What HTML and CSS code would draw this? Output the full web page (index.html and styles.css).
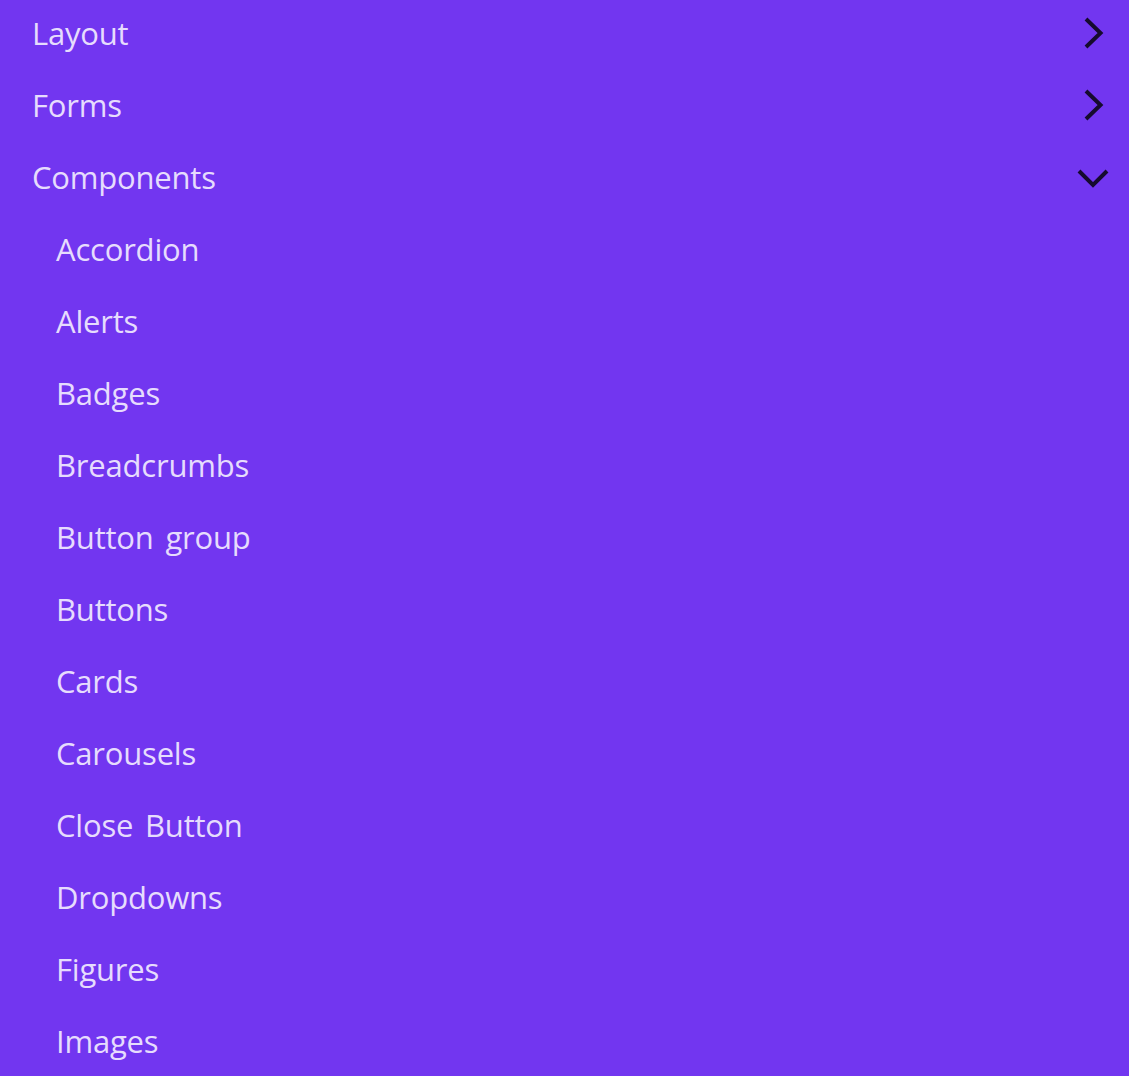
FILE: index.html
```html
<!DOCTYPE html>
<html lang="en">
<head>
  <meta charset="UTF-8" />
  <meta name="viewport" content="width=device-width, initial-scale=1" />
  <title>Sidebar menu</title>
  <link rel="stylesheet" href="styles.css">
</head>
<body>

  <nav class="menu">
    <a class="menu-item" href="#">
      <span>Layout</span>
      <svg class="chev" viewBox="0 0 32 32"><path d="M9 2l14.5 14L9 30"/></svg>
    </a>
    <a class="menu-item" href="#">
      <span>Forms</span>
      <svg class="chev" viewBox="0 0 32 32"><path d="M9 2l14.5 14L9 30"/></svg>
    </a>
    <a class="menu-item open" href="#">
      <span>Components</span>
      <svg class="chev" viewBox="0 0 32 32"><path d="M2 10l14 14 14-14"/></svg>
    </a>

    <div class="submenu">
      <a class="sub-item" href="#">Accordion</a>
      <a class="sub-item" href="#">Alerts</a>
      <a class="sub-item" href="#">Badges</a>
      <a class="sub-item" href="#">Breadcrumbs</a>
      <a class="sub-item" href="#">Button group</a>
      <a class="sub-item" href="#">Buttons</a>
      <a class="sub-item" href="#">Cards</a>
      <a class="sub-item" href="#">Carousels</a>
      <a class="sub-item" href="#">Close Button</a>
      <a class="sub-item" href="#">Dropdowns</a>
      <a class="sub-item" href="#">Figures</a>
      <a class="sub-item" href="#">Images</a>
    </div>
  </nav>

</body>
</html>
```

FILE: styles.css
```css
:root{
  --bg:#7236f0;
  --text:#e6dcfd;
  --icon:#160b2e;
}
*{box-sizing:border-box;margin:0;padding:0}
body{
  background:var(--bg);
  font-family:"Open Sans","Noto Sans",Arial,sans-serif;
  overflow:hidden;
}
.menu{display:flex;flex-direction:column}
.menu-item,.sub-item{
  height:72px;
  display:flex;
  align-items:center;
  padding-bottom:6px;
  color:var(--text);
  text-decoration:none;
  font-size:31px;
  letter-spacing:-.2px;
  word-spacing:4px;
}
.menu-item{
  justify-content:space-between;
  padding-left:32px;
  padding-right:20px;
}
.sub-item{padding-left:56px}
.chev{
  width:32px;
  height:32px;
  fill:none;
  stroke:var(--icon);
  stroke-width:4;
}
```
